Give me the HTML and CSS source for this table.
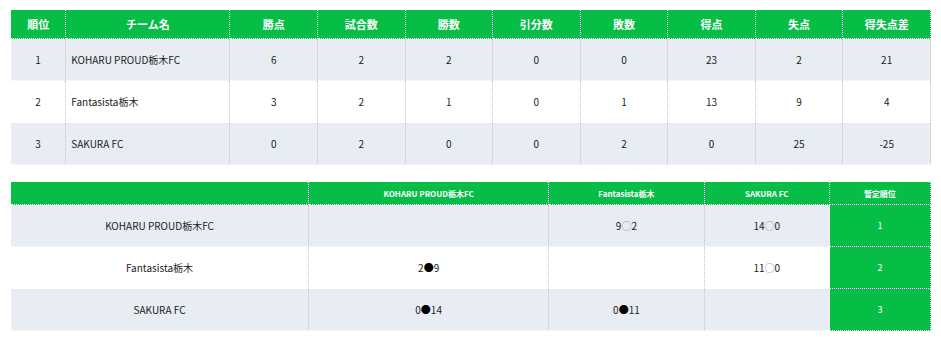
FILE: index.html
```html
<!DOCTYPE html>
<html lang="ja">
<head>
<meta charset="utf-8">
<title>順位表</title>
<link rel="stylesheet" href="styles.css">
</head>
<body>
<div class="page">
  <table class="standings">
    <colgroup>
      <col class="c-rank"><col class="c-team"><col class="c-n"><col class="c-n"><col class="c-n"><col class="c-n"><col class="c-n"><col class="c-n"><col class="c-n"><col class="c-n">
    </colgroup>
    <thead>
      <tr><th>順位</th><th>チーム名</th><th>勝点</th><th>試合数</th><th>勝数</th><th>引分数</th><th>敗数</th><th>得点</th><th>失点</th><th>得失点差</th></tr>
    </thead>
    <tbody>
      <tr class="odd"><td>1</td><td class="team">KOHARU PROUD栃木FC</td><td>6</td><td>2</td><td>2</td><td>0</td><td>0</td><td>23</td><td>2</td><td>21</td></tr>
      <tr><td>2</td><td class="team">Fantasista栃木</td><td>3</td><td>2</td><td>1</td><td>0</td><td>1</td><td>13</td><td>9</td><td>4</td></tr>
      <tr class="odd"><td>3</td><td class="team">SAKURA FC</td><td>0</td><td>2</td><td>0</td><td>0</td><td>2</td><td>0</td><td>25</td><td>-25</td></tr>
    </tbody>
  </table>

  <table class="matrix">
    <colgroup>
      <col class="m1"><col class="m2"><col class="m3"><col class="m4"><col class="m5">
    </colgroup>
    <thead>
      <tr><th></th><th>KOHARU PROUD栃木FC</th><th>Fantasista栃木</th><th>SAKURA FC</th><th>暫定順位</th></tr>
    </thead>
    <tbody>
      <tr class="odd"><td>KOHARU PROUD栃木FC</td><td></td><td>9<span class="win">○</span>2</td><td class="pre">14<span class="win">○</span>0</td><td class="pos">1</td></tr>
      <tr><td>Fantasista栃木</td><td>2<span class="loss">●</span>9</td><td></td><td class="pre">11<span class="win">○</span>0</td><td class="pos">2</td></tr>
      <tr class="odd"><td>SAKURA FC</td><td>0<span class="loss">●</span>14</td><td>0<span class="loss">●</span>11</td><td class="pre"></td><td class="pos">3</td></tr>
    </tbody>
  </table>
</div>
</body>
</html>
```
FILE: styles.css
```css
html, body {
  margin: 0;
  padding: 0;
  background: #fff;
}
body {
  font-family: "Noto Sans CJK JP", "Noto Sans", sans-serif;
  color: #222;
}
.page {
  padding: 10px 10px 0 11px;
  display: flex;
  flex-direction: column;
  gap: 17px;
}
table {
  width: 100%;
  border-collapse: separate;
  border-spacing: 0;
  table-layout: fixed;
}
th {
  background: #06bd46;
  color: #fff;
  font-weight: 700;
  text-align: center;
  padding: 0;
  border-right: 1px dotted #fff;
  border-bottom: 1px dotted #fff;
}
td {
  text-align: center;
  padding: 0;
  font-size: 10px;
  border-right: 1px dotted #c4c4c4;
  border-bottom: 1px dotted #fff;
}
tr.odd td {
  background: #e7edf3;
}

.standings th {
  font-size: 11px;
  height: 28px;
}
.standings tbody tr {
  height: 42px;
}
.standings .c-rank { width: 6%; }
.standings .c-team { width: 17.8%; }
.standings .c-n { width: 9.5%; }
.standings td.team {
  text-align: left;
  padding-left: 5px;
}

.matrix th {
  font-size: 8px;
  height: 22px;
}
.matrix tbody tr {
  height: 42px;
}
.matrix .m1 { width: 32.4%; }
.matrix .m2 { width: 26.1%; }
.matrix .m3 { width: 16.9%; }
.matrix .m4 { width: 13.6%; }
.matrix .m5 { width: 11%; }
.matrix td.pre {
  border-right-color: #fff;
}
.matrix td.pos,
tr.odd td.pos {
  background: #06bd46;
  color: #fff;
  font-size: 9px;
  border-right: 1px dotted #fff;
}
.win {
  color: #999;
}
.loss {
  color: #000;
}
```
